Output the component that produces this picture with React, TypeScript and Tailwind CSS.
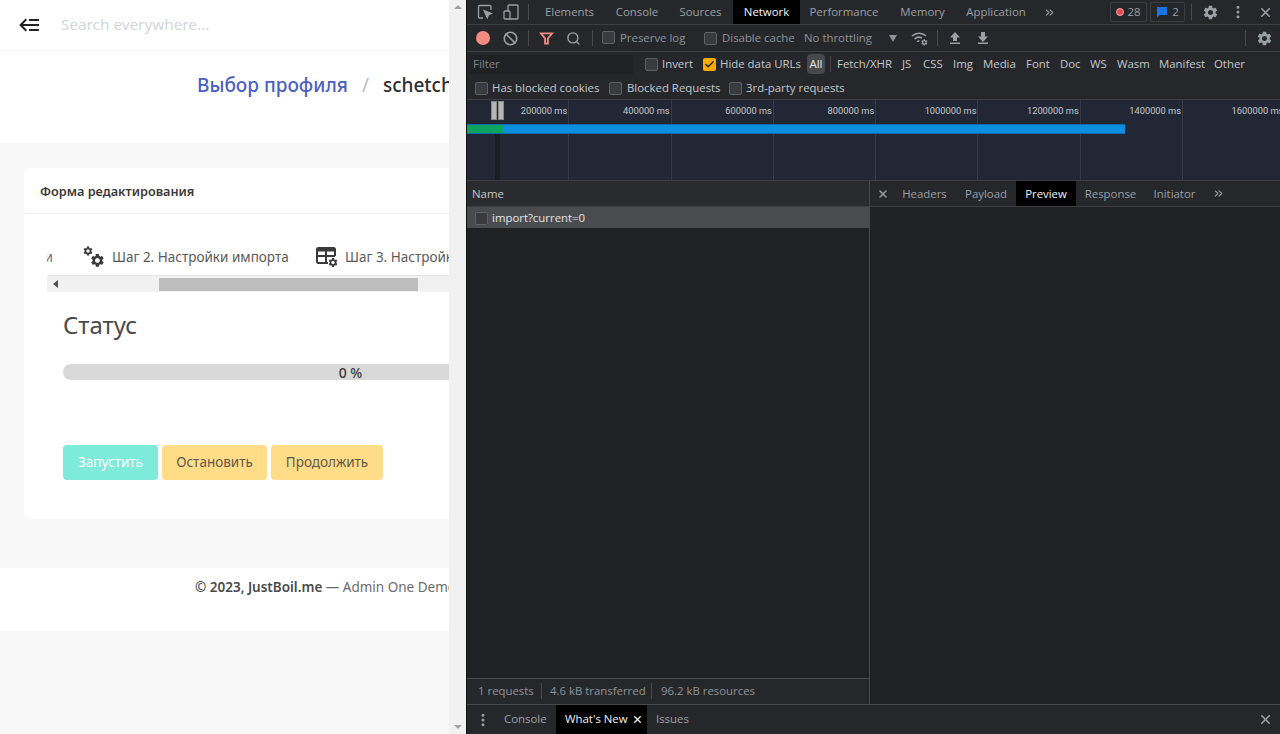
import { ChevronsRight, Search, Ban, X, EllipsisVertical, Check } from 'lucide-react';

const GEAR =
  'M19.14 12.94c.04-.3.06-.61.06-.94 0-.32-.02-.64-.07-.94l2.03-1.58c.18-.14.23-.41.12-.61l-1.92-3.32c-.12-.22-.37-.29-.59-.22l-2.39.96c-.5-.38-1.03-.7-1.62-.94l-.36-2.54c-.04-.24-.24-.41-.48-.41h-3.84c-.24 0-.43.17-.47.41l-.36 2.54c-.59.24-1.13.57-1.62.94l-2.39-.96c-.22-.08-.47 0-.59.22L2.74 8.87c-.12.21-.08.47.12.61l2.03 1.58c-.05.3-.09.63-.09.94s.02.64.07.94l-2.03 1.58c-.18.14-.23.41-.12.61l1.92 3.32c.12.22.37.29.59.22l2.39-.96c.5.38 1.03.7 1.62.94l.36 2.54c.05.24.24.41.48.41h3.84c.24 0 .44-.17.47-.41l.36-2.54c.59-.24 1.13-.56 1.62-.94l2.39.96c.22.08.47 0 .59-.22l1.92-3.32c.12-.22.07-.47-.12-.61l-2.01-1.58zM12 15.6c-1.98 0-3.6-1.62-3.6-3.6s1.62-3.6 3.6-3.6 3.6 1.62 3.6 3.6-1.62 3.6-3.6 3.6z';

function Gear({ className }: { className: string }) {
  return (
    <svg viewBox="0 0 24 24" className={className} fill="currentColor">
      <path d={GEAR} />
    </svg>
  );
}

function CogsIcon() {
  return (
    <svg viewBox="0 0 22 22" className="w-[22px] h-[22px] text-[#3a3a3a]" fill="currentColor">
      <g transform="translate(-0.5 -0.5) scale(0.46)">
        <path d={GEAR} />
      </g>
      <g transform="translate(6.5 6.5) scale(0.66)">
        <path d={GEAR} />
      </g>
    </svg>
  );
}

function TableCogIcon() {
  return (
    <svg viewBox="0 0 24 24" className="w-[24px] h-[24px] text-[#3a3a3a]" fill="none" stroke="currentColor">
      <path strokeWidth="2" d="M13 18H3.5a1.5 1.5 0 0 1-1.5-1.5v-12A1.5 1.5 0 0 1 3.5 3h15A1.5 1.5 0 0 1 20 4.500V11" />
      <path strokeWidth="3" d="M2 5h18" />
      <path strokeWidth="2" d="M2 11h18M11 4v14" />
      <g transform="translate(12.500 12) scale(0.46)" fill="currentColor" stroke="none">
        <path d={GEAR} />
      </g>
    </svg>
  );
}

function Box({ on }: { on?: boolean }) {
  return on ? (
    <span className="w-[13px] h-[13px] rounded-[2px] bg-[#f9ab00] flex items-center justify-center shrink-0">
      <Check size={11} strokeWidth={3} className="text-[#202124]" />
    </span>
  ) : (
    <span className="w-[13px] h-[13px] rounded-[2px] bg-[#3a3b3e] border border-[#5f6063] shrink-0" />
  );
}

function Sep({ className }: { className: string }) {
  return <span className={`w-px h-[16px] bg-[#47494c] shrink-0 ${className}`} />;
}

function Tab({ label, active, className }: { label: string; active?: boolean; className: string }) {
  return (
    <span
      className={`h-full flex items-center justify-center shrink-0 ${className} ${
        active ? 'bg-black text-[#f1f3f4]' : 'text-[#9aa0a6]'
      }`}
    >
      {label}
    </span>
  );
}

const filterTypes = [
  { label: 'Fetch/XHR', w: 'w-[65px]' },
  { label: 'JS', w: 'w-[21px]' },
  { label: 'CSS', w: 'w-[30px]' },
  { label: 'Img', w: 'w-[30px]' },
  { label: 'Media', w: 'w-[43px]' },
  { label: 'Font', w: 'w-[34px]' },
  { label: 'Doc', w: 'w-[30px]' },
  { label: 'WS', w: 'w-[27px]' },
  { label: 'Wasm', w: 'w-[42px]' },
  { label: 'Manifest', w: 'w-[55px]' },
  { label: 'Other', w: 'w-[40px]' },
];

const overviewLabels = ['200000 ms', '400000 ms', '600000 ms', '800000 ms', '1000000 ms', '1200000 ms', '1400000 ms', '1600000 ms'];

function LeftPage() {
  return (
    <div className="w-[449px] h-full overflow-hidden bg-[#f8f8f8] shrink-0 font-['Noto_Sans',sans-serif]">
      <div className="w-[900px]">
        <div className="h-[51px] bg-white border-b border-[#f5f5f5] flex items-center">
          <svg viewBox="0 0 24 24" className="w-[24px] h-[24px] ml-[18px] text-[#222]" fill="currentColor">
            <path d="M5 13L9 17L7.6 18.42L1.18 12L7.6 5.58L9 7L5 11H21V13H5M21 6V8H11V6H21M21 16V18H11V16H21Z" />
          </svg>
          <span className="ml-[19px] mb-[2px] text-[15.300px] text-[#d4d6da]">Search everywhere...</span>
        </div>
        <div className="h-[93px] bg-white border-b border-[#f5f5f5] pl-[197px] pt-[19px] flex items-start text-[19px] font-medium leading-[30px]">
          <span className="text-[#4a60c4]">Выбор профиля</span>
          <span className="ml-[14px] text-[#b8bcc4] font-normal">/</span>
          <span className="ml-[14px] text-[#2e2e2e]">schetch</span>
        </div>
        <div className="px-[24px] pt-[24px] h-[424px]">
          <div className="w-[800px] h-[351px] bg-white rounded-[6px] border border-white">
            <div className="h-[45px] border-b border-[#f0f0f0] flex items-center pl-[15px] pt-[1px] text-[12.700px] font-semibold text-[#3a3a3a]">
              Форма редактирования
            </div>
            <div className="pl-[22px] pt-[28px] h-[62px]">
              <div className="flex items-center h-[30px] text-[13.500px] text-[#5a5a5a] whitespace-nowrap">
                <span className="w-[36px] flex">
                  <span className="w-[6px] overflow-hidden flex justify-end text-[#6b7280]">и</span>
                </span>
                <CogsIcon />
                <span className="ml-[7px] w-[175px]">Шаг 2. Настройки импорта</span>
                <span className="ml-[28px] flex">
                  <TableCogIcon />
                </span>
                <span className="ml-[6px]">Шаг 3. Настройки</span>
              </div>
              <div className="h-[17px] mt-[3px] bg-[#f1f1f1] flex items-center border-t border-[#e8e8e8]">
                <span className="ml-[6px] w-0 h-0 border-y-[4px] border-y-transparent border-r-[5px] border-r-[#505050]" />
                <span className="ml-[101px] w-[259px] h-[13px] bg-[#bdbdbd]" />
              </div>
            </div>
            <div className="pl-[38px] pt-[8px]">
              <div className="text-[24px] leading-[32px] text-[#4a4a4a] mt-[25px]">Статус</div>
              <div className="mt-[23px] w-[575px] h-[16px] rounded-full bg-[#d8d8d8] flex items-center justify-center text-[14px] font-medium text-[#3a3a3a]">
                0 %
              </div>
              <div className="mt-[65px] flex text-[13.500px]">
                <span className="w-[95px] h-[35px] rounded-[4px] bg-[#7eead9] text-white flex items-center justify-center">Запустить</span>
                <span className="ml-[4px] w-[105px] h-[35px] rounded-[4px] bg-[#ffdc87] text-[#5f5a48] flex items-center justify-center">Остановить</span>
                <span className="ml-[4px] w-[112px] h-[35px] rounded-[4px] bg-[#ffdc87] text-[#5f5a48] flex items-center justify-center">Продолжить</span>
              </div>
            </div>
          </div>
        </div>
        <div className="h-[63px] bg-white pl-[195px] pt-[9px] text-[13.500px] leading-[20px] whitespace-nowrap">
          <span className="font-semibold text-[#4a4a4a]">© 2023, JustBoil.me</span>
          <span className="text-[#6b6b6b]"> — Admin One Demo</span>
        </div>
      </div>
    </div>
  );
}

function PageScrollbar() {
  return (
    <div className="w-[17px] h-full bg-[#f1f1f1] shrink-0 flex flex-col items-center justify-between py-[5px]">
      <span className="w-0 h-0 border-x-[4px] border-x-transparent border-b-[4px] border-b-[#a3a3a3]" />
      <span className="w-0 h-0 border-x-[4px] border-x-transparent border-t-[4px] border-t-[#a3a3a3]" />
    </div>
  );
}

function TopTabs() {
  return (
    <div className="h-[25px] border-b border-[#3d3e41] flex items-center">
      <svg viewBox="0 0 16 16" className="w-[16px] h-[16px] ml-[10px] text-[#9aa0a6]" fill="none" stroke="currentColor" strokeWidth="1.300">
        <path d="M6 14H2.500A1 1 0 0 1 1.500 13V2.500a1 1 0 0 1 1-1H13a1 1 0 0 1 1 1V6" />
        <path d="M7 6.500l7.500 3-3 1.200-1.200 3z" fill="currentColor" />
      </svg>
      <svg viewBox="0 0 16 16" className="w-[16px] h-[16px] ml-[10px] text-[#9aa0a6]" fill="none" stroke="currentColor" strokeWidth="1.300">
        <rect x="5" y="1" width="10" height="14" rx="1" />
        <rect x="1" y="7" width="6" height="8" rx="1" fill="#26272b" />
      </svg>
      <Sep className="ml-[9px]" />
      <Tab label="Elements" className="w-[73px] ml-[4px]" />
      <Tab label="Console" className="w-[62px]" />
      <Tab label="Sources" className="w-[65px]" />
      <Tab label="Network" active className="w-[67px]" />
      <Tab label="Performance" className="w-[88px]" />
      <Tab label="Memory" className="w-[69px]" />
      <Tab label="Application" className="w-[78px]" />
      <ChevronsRight size={13} className="text-[#9aa0a6] ml-[8px]" />
      <span className="ml-[54px] w-[37px] h-[20px] border border-[#3d3e41] rounded-[2px] flex items-center justify-center gap-[3px] text-[#9aa0a6]">
        <span className="w-[8px] h-[8px] rounded-full bg-[#e5474b] border border-[#f6aea9]" />
        28
      </span>
      <span className="ml-[3px] w-[35px] h-[20px] border border-[#3d3e41] rounded-[2px] flex items-center justify-center gap-[4px] text-[#9aa0a6]">
        <svg viewBox="0 0 12 12" className="w-[12px] h-[12px] text-[#1a73e8]" fill="currentColor">
          <path d="M1 1h10v8H4l-3 2.500z" />
        </svg>
        2
      </span>
      <Sep className="ml-[6px]" />
      <Gear className="w-[17px] h-[17px] ml-[10px] text-[#9aa0a6]" />
      <EllipsisVertical size={16} strokeWidth={2.500} className="ml-[11px] text-[#9aa0a6]" />
      <X size={15} strokeWidth={2.500} className="ml-[12px] text-[#9aa0a6]" />
    </div>
  );
}

function Toolbar() {
  return (
    <div className="h-[27px] border-b border-[#3d3e41] flex items-center text-[#8f949a]">
      <span className="ml-[9px] w-[14px] h-[14px] rounded-full bg-[#f28b82]" />
      <Ban size={15} strokeWidth={2.500} className="ml-[13px] text-[#9aa0a6]" />
      <Sep className="ml-[10px]" />
      <svg viewBox="0 0 16 16" className="w-[15px] h-[15px] ml-[10px]" fill="none" stroke="#f28b82" strokeWidth="2">
        <path d="M2 2.500h12L9.500 8v5.500h-3V8z" />
      </svg>
      <Search size={15} strokeWidth={2.200} className="ml-[12px] text-[#9aa0a6]" />
      <Sep className="ml-[11px]" />
      <span className="ml-[9px] flex items-center w-[102px]">
        <Box />
        <span className="ml-[5px]">Preserve log</span>
      </span>
      <Box />
      <span className="ml-[5px] w-[82px]">Disable cache</span>
      <span className="w-[84px]">No throttling</span>
      <span className="ml-[1px] w-0 h-0 border-x-[4px] border-x-transparent border-t-[7px] border-t-[#8f949a]" />
      <svg viewBox="0 0 18 18" className="w-[18px] h-[18px] ml-[14px] text-[#9aa0a6]" fill="none" stroke="currentColor" strokeWidth="1.500">
        <path d="M1 7a10 10 0 0 1 14 0M3.500 10a6.500 6.500 0 0 1 7.500-1M6 12.500a3 3 0 0 1 2.500-.5" />
        <g transform="translate(9.500 9.500) scale(0.32)" fill="currentColor" stroke="none">
          <path d={GEAR} />
        </g>
      </svg>
      <Sep className="ml-[8px]" />
      <svg viewBox="0 0 12 14" className="w-[12px] h-[14px] ml-[11px] text-[#9aa0a6]" fill="currentColor">
        <path d="M6 1l5 5.500H8V10H4V6.500H1zM1 11.500h10V13H1z" />
      </svg>
      <svg viewBox="0 0 12 14" className="w-[12px] h-[14px] ml-[16px] text-[#9aa0a6]" fill="currentColor">
        <path d="M4 1h4v4.500h3L6 11 1 5.500h3zM1 11.500h10V13H1z" />
      </svg>
      <span className="flex-1" />
      <Sep className="" />
      <Gear className="w-[17px] h-[17px] ml-[10px] mr-[7px] text-[#9aa0a6]" />
    </div>
  );
}

function FilterRows() {
  return (
    <div className="h-[48px] border-b border-[#3d3e41] text-[#c4c7cc]">
      <div className="h-[24px] flex items-center">
        <span className="ml-[3px] w-[163px] h-[19px] bg-[#202124] pl-[3px] flex items-center text-[#80868b]">Filter</span>
        <span className="ml-[12px] flex">
          <Box />
        </span>
        <span className="ml-[4px] w-[41px]">Invert</span>
        <Box on />
        <span className="ml-[4px] w-[87px]">Hide data URLs</span>
        <span className="w-[18px] h-[20px] rounded-[4px] bg-[#47494c] flex items-center justify-center text-[#e8eaed]">All</span>
        <Sep className="ml-[5px]" />
        <div className="ml-[6px] flex">
          {filterTypes.map((f) => (
            <span key={f.label} className={`${f.w} shrink-0`}>
              {f.label}
            </span>
          ))}
        </div>
      </div>
      <div className="h-[24px] flex items-center pl-[8px]">
        <Box />
        <span className="ml-[4px] w-[117px]">Has blocked cookies</span>
        <Box />
        <span className="ml-[5px] w-[102px]">Blocked Requests</span>
        <Box />
        <span className="ml-[4px]">3rd-party requests</span>
      </div>
    </div>
  );
}

function Overview() {
  return (
    <div className="relative h-[81px] bg-[#212734] border-b border-[#3d3e41] flex overflow-hidden">
      {overviewLabels.map((l) => (
        <div
          key={l}
          className="w-[102.300px] shrink-0 border-r border-[#353a46] pt-[4px] pr-[1px] text-right text-[9.300px] leading-[14px] font-['Roboto',sans-serif] text-[#c4c7cc] whitespace-nowrap"
        >
          {l}
        </div>
      ))}
      <div className="absolute left-[28px] top-[34px] w-[5px] h-[46px] bg-[#1c1d20]" />
      <div className="absolute left-[24px] top-[1px] w-[6px] h-[19px] bg-[#b5b5b5] border border-[#8a8a8a]" />
      <div className="absolute left-[31px] top-[1px] w-[6px] h-[19px] bg-[#b5b5b5] border border-[#8a8a8a]" />
      <div className="absolute left-0 top-[24px] h-[10px] w-[658px] bg-[#0b8fde] border-y border-[#0b6aa8]">
        <div className="w-[36px] h-full bg-[#0da35e]" />
      </div>
    </div>
  );
}

function Panels() {
  return (
    <div className="flex-1 flex min-h-0">
      <div className="w-[403px] shrink-0 border-r border-[#47494c] flex flex-col">
        <div className="h-[26px] bg-[#2a2b2f] border-b border-[#3d3e41] flex items-center pl-[5px] pt-[1px] text-[#c4c7cc]">Name</div>
        <div className="h-[21px] bg-[#4a4b4f] flex items-center pl-[8px] pt-[1px] text-[#e3e5e8]">
          <Box />
          <span className="ml-[4px]">import?current=0</span>
        </div>
        <div className="flex-1 bg-[#202124]" />
        <div className="h-[26px] border-t border-[#47494c] flex items-center pl-[11px] pb-[1px] text-[#8f949a]">
          <span className="w-[63px]">1 requests</span>
          <Sep className="" />
          <span className="ml-[8px] w-[101px]">4.6 kB transferred</span>
          <Sep className="" />
          <span className="ml-[9px]">96.2 kB resources</span>
        </div>
      </div>
      <div className="flex-1 flex flex-col">
        <div className="h-[26px] border-b border-[#3d3e41] flex items-center">
          <X size={12} strokeWidth={3} className="ml-[7px] text-[#9aa0a6]" />
          <Tab label="Headers" className="ml-[4px] w-[63px]" />
          <Tab label="Payload" className="w-[60px]" />
          <Tab label="Preview" active className="w-[60px]" />
          <Tab label="Response" className="w-[69px]" />
          <Tab label="Initiator" className="w-[59px]" />
          <ChevronsRight size={13} className="ml-[8px] text-[#9aa0a6]" />
        </div>
        <div className="flex-1 bg-[#202124]" />
      </div>
    </div>
  );
}

function Drawer() {
  return (
    <div className="h-[30px] border-t border-[#47494c] flex items-center text-[#9aa0a6]">
      <EllipsisVertical size={16} strokeWidth={2.500} className="ml-[8px]" />
      <span className="ml-[13px] w-[52px] pb-[1px]">Console</span>
      <span className="h-full w-[91px] bg-black text-[#f1f3f4] flex items-center pl-[9px] pb-[1px]">
        <span className="w-[67px]">What's New</span>
        <X size={11} strokeWidth={3} />
      </span>
      <span className="ml-[9px] pb-[1px]">Issues</span>
      <span className="flex-1" />
      <X size={15} strokeWidth={2.500} className="mr-[7px]" />
    </div>
  );
}

export default function App() {
  return (
    <div className="w-[1280px] h-[734px] flex overflow-hidden">
      <LeftPage />
      <PageScrollbar />
      <div className="flex-1 min-w-0 h-full flex flex-col bg-[#26272b] border-l border-[#111] text-[11.400px] font-['Open_Sans',sans-serif] whitespace-nowrap">
        <TopTabs />
        <Toolbar />
        <FilterRows />
        <Overview />
        <Panels />
        <Drawer />
      </div>
    </div>
  );
}
